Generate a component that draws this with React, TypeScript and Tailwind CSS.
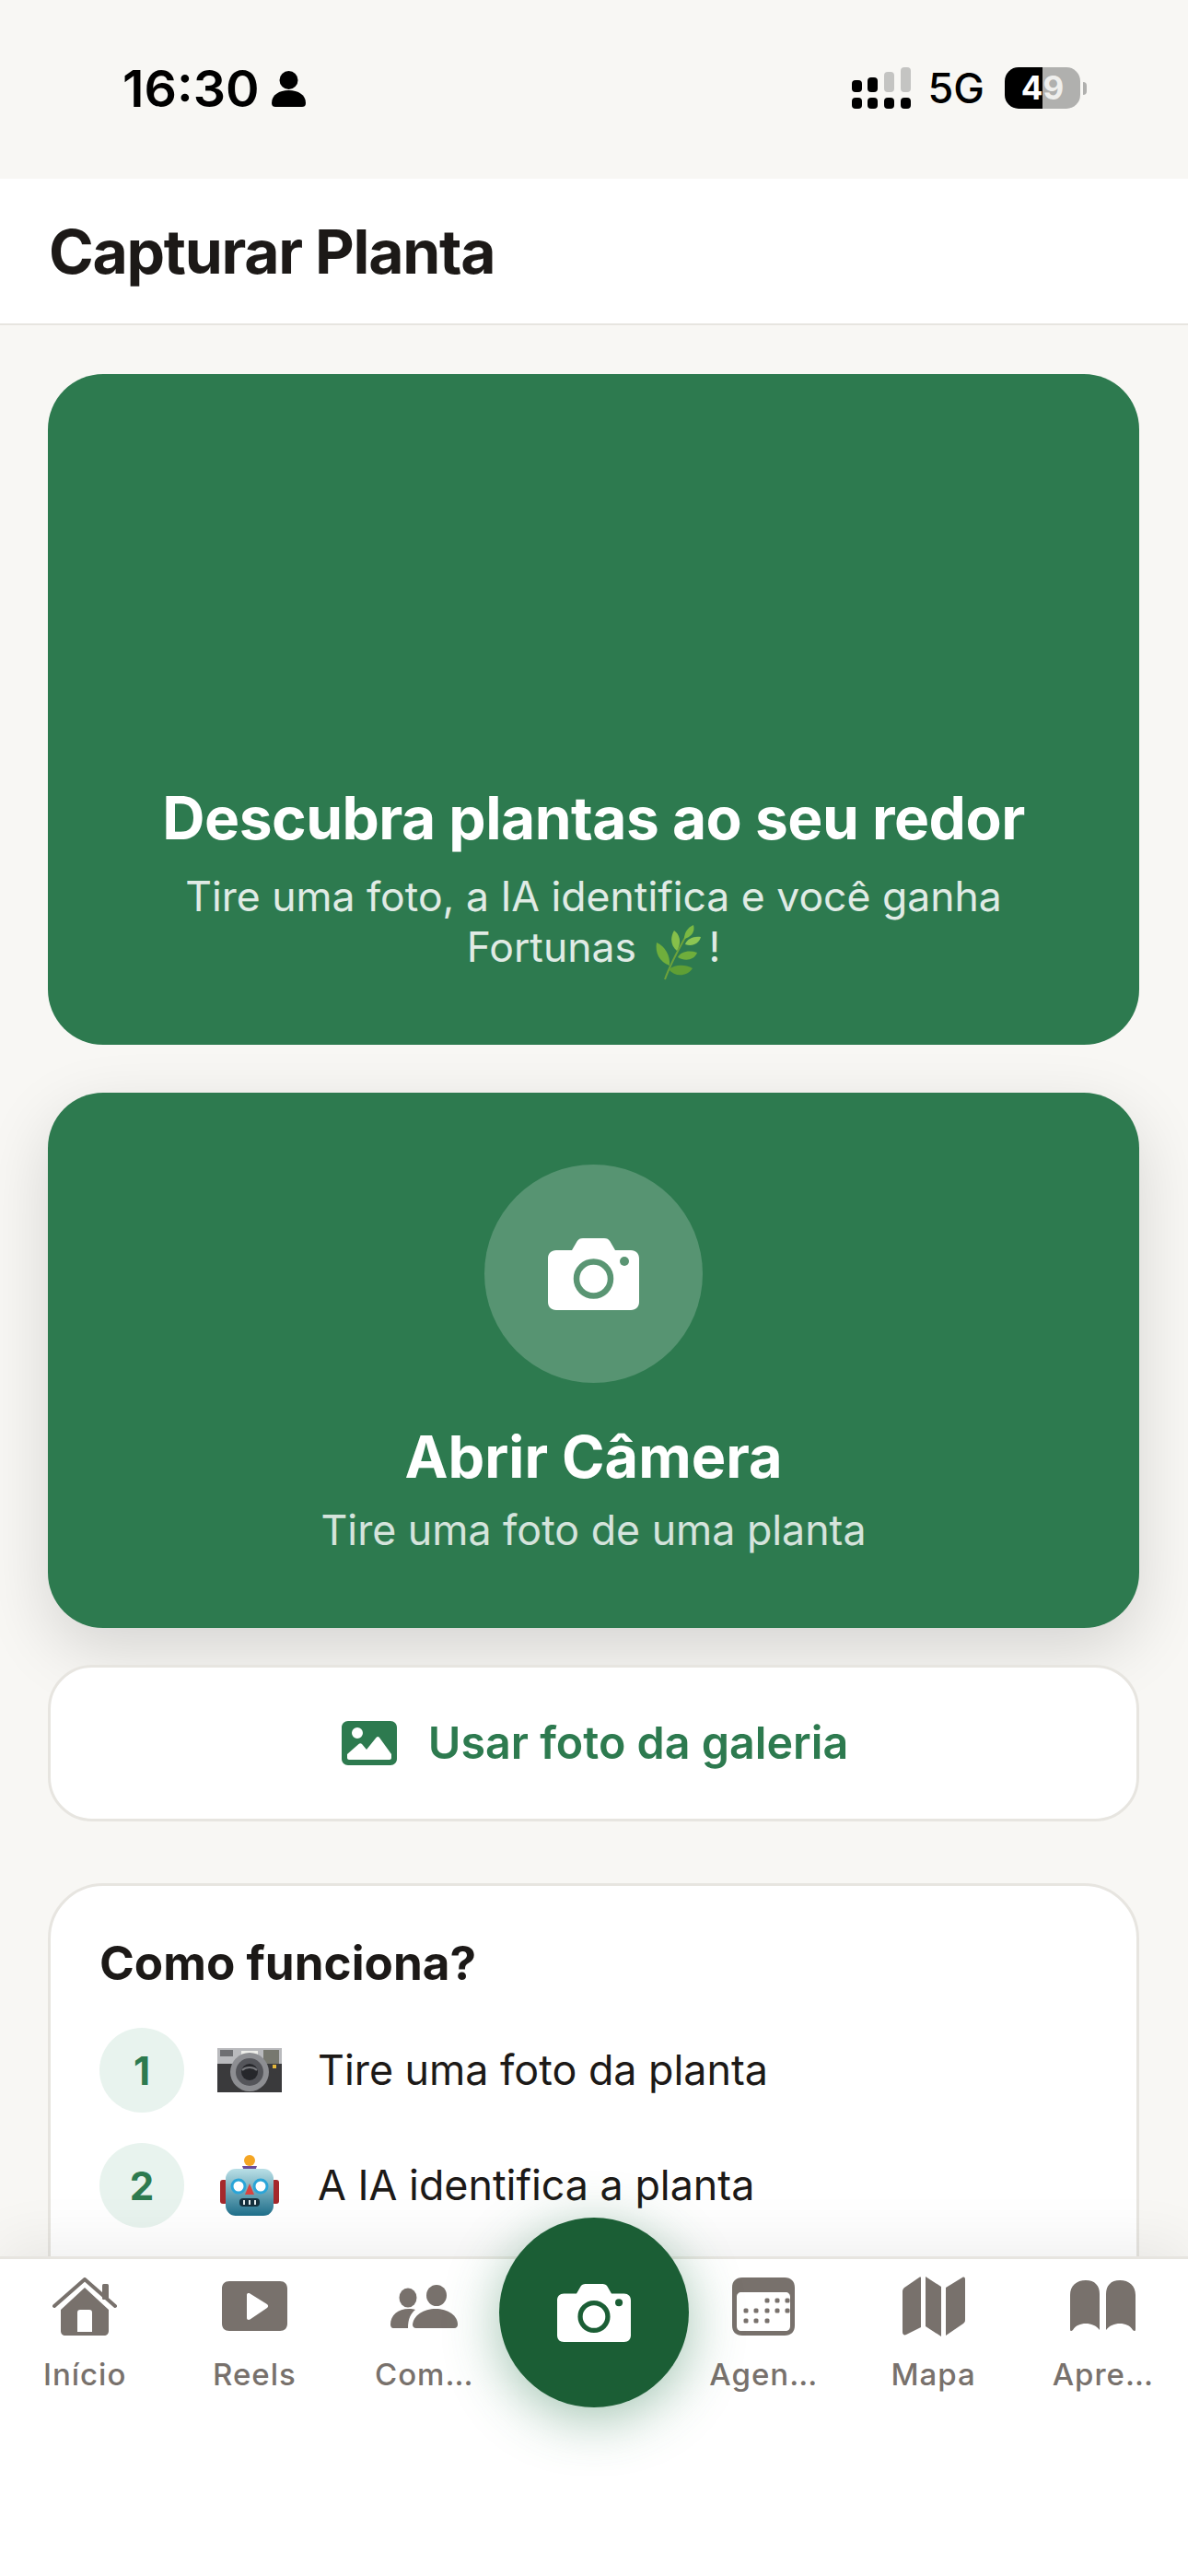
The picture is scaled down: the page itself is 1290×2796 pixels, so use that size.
const green = "#2d7a4f";

function CameraIcon({ className, hole }: { className: string; hole: string }) {
  return (
    <svg viewBox="0 0 99 78" className={className}>
      <path
        fill="#fff"
        d="M9 13h17l5.500-9.500C33 1 35 0 38 0h23c3 0 5 1 6.500 3.500L73 13h17c5.500 0 9 3.500 9 9v47c0 5.500-3.500 9-9 9H9c-5.500 0-9-3.500-9-9V22c0-5.500 3.500-9 9-9z"
      />
      <circle cx="49.500" cy="44" r="18.500" fill="none" stroke={hole} strokeWidth="6.500" />
      <circle cx="83" cy="25" r="5" fill={hole} />
    </svg>
  );
}

function HerbEmoji() {
  return (
    <svg viewBox="0 0 56 60" className="mx-[5px] -my-[10px] inline-block h-[60px] w-[56px] align-[-10px]">
      <path d="M14 59C20 42 31 22 42 3" fill="none" stroke="#6ea23a" strokeWidth="2" />
      <path fill="#6fae3c" d="M19 44C8 40 3 30 5 19c9 4 15 14 14 25z" />
      <path fill="#86c04a" d="M27 28c-6-5-8-13-3-22 7 5 8 14 3 22z" />
      <path fill="#7ab843" d="M35 15c0-6 3-12 10-15 2 7-2 13-10 15z" />
      <path fill="#8cc653" d="M36 21c2-6 9-9 17-8-2 7-9 11-17 8z" />
      <path fill="#6fae3c" d="M28 35c3-6 12-8 21-5-3 8-13 10-21 5z" />
      <path fill="#5f9f35" d="M18 48c7-5 17-6 26-1-6 9-19 10-26 1z" />
    </svg>
  );
}

function CameraEmoji() {
  return (
    <svg viewBox="0 0 70 48" className="h-[48px] w-[70px]">
      <rect x="0" y="0" width="70" height="20" fill="#b9babd" />
      <rect x="3" y="2" width="14" height="7" fill="#6e6f72" />
      <rect x="26" y="3" width="18" height="8" fill="#eeeeea" />
      <rect x="50" y="2" width="17" height="15" fill="#77786f" />
      <rect x="0" y="17" width="70" height="31" fill="#3a3a3c" />
      <circle cx="35" cy="26" r="21" fill="#8d8e92" />
      <circle cx="35" cy="26" r="15" fill="#54555a" />
      <circle cx="35" cy="26" r="9" fill="#26272b" />
      <path d="M27 24c4-4 12-4 16 0" fill="none" stroke="#77787c" strokeWidth="2" />
      <rect x="60" y="18" width="4" height="4" fill="#e5b93c" />
    </svg>
  );
}

function RobotEmoji() {
  return (
    <svg viewBox="0 0 64 66" className="h-[66px] w-[64px]">
      <rect x="0" y="27" width="8" height="26" rx="3" fill="#a5282c" />
      <rect x="56" y="27" width="8" height="26" rx="3" fill="#a5282c" />
      <circle cx="32" cy="6" r="6" fill="#f5a623" />
      <path d="M24 12h16l-3 8H27z" fill="#6b4c9a" />
      <defs>
        <linearGradient id="robot" x1="0" y1="0" x2="0" y2="1">
          <stop offset="0" stopColor="#b9dfe6" />
          <stop offset="1" stopColor="#1f6f8b" />
        </linearGradient>
      </defs>
      <rect x="6" y="15" width="52" height="51" rx="11" fill="url(#robot)" />
      <circle cx="20" cy="34" r="7" fill="#fff" stroke="#2aa5d8" strokeWidth="3" />
      <circle cx="44" cy="34" r="7" fill="#fff" stroke="#2aa5d8" strokeWidth="3" />
      <path d="M32 31l5 12H27z" fill="#d9433f" />
      <rect x="21" y="47" width="22" height="9" rx="4" fill="#15303d" />
      <path d="M26 49v5M32 49v5M38 49v5" stroke="#e6eef0" strokeWidth="2" />
    </svg>
  );
}

function HomeIcon() {
  return (
    <svg viewBox="0 0 70 63" className="h-[63px] w-[70px]" fill="#78716c">
      <path d="M35 11L9 35v23c0 3 2 5 5 5h42c3 0 5-2 5-5V35L35 11zM27 38c0-2 1-3 3-3h10c2 0 3 1 3 3v21H27V38z" fillRule="evenodd" />
      <path d="M2 31L35 2l33 29" fill="none" stroke="#78716c" strokeWidth="4" strokeLinecap="round" strokeLinejoin="round" />
      <rect x="54" y="7" width="7" height="17" rx="1.500" />
    </svg>
  );
}

function ReelsIcon() {
  return (
    <svg viewBox="0 0 71 54" className="h-[54px] w-[71px]" fill="#78716c">
      <path
        fillRule="evenodd"
        d="M8 0h55c5 0 8 3 8 8v38c0 5-3 8-8 8H8c-5 0-8-3-8-8V8c0-5 3-8 8-8zM27 15v25c0 2 2 2.500 3.500 1.500L49 29c1.500-1 1.500-3 0-4L30.500 13.500C29 12.500 27 13 27 15z"
      />
    </svg>
  );
}

function CommunityIcon() {
  return (
    <svg viewBox="0 0 73 47" className="h-[47px] w-[73px]" fill="#78716c">
      <ellipse cx="19" cy="14" rx="9.500" ry="10.500" />
      <ellipse cx="50" cy="11.500" rx="11" ry="11.500" />
      <path d="M0 43c0-10 8-17 20-17 3 0 5 .4 7 1-5 4-8 10-8 20H3c-2 0-3-2-3-4z" />
      <path d="M28 47c-3 0-4-2-4-4 1-10 12-17 25-17s24 7 24 17c0 2-1 4-4 4H28z" />
    </svg>
  );
}

function AgendaIcon() {
  const dots = [
    [38, 25], [49, 25], [60, 25],
    [15, 36], [26, 36], [38, 36], [49, 36], [60, 36],
    [15, 47], [26, 47], [38, 47],
  ];
  return (
    <svg viewBox="0 0 68 63" className="h-[63px] w-[68px]" fill="#78716c">
      <path
        fillRule="evenodd"
        d="M11 0h46c7 0 11 4 11 11v41c0 7-4 11-11 11H11C4 63 0 59 0 52V11C0 4 4 0 11 0zM10 16c-3 0-5 2-5 5v32c0 3 2 5 5 5h48c3 0 5-2 5-5V21c0-3-2-5-5-5H10z"
      />
      {dots.map(([x, y]) => (
        <rect key={`${x}-${y}`} x={x - 2.500} y={y - 2.500} width="5" height="5" rx="1.500" />
      ))}
    </svg>
  );
}

function MapIcon() {
  return (
    <svg viewBox="0 0 68 65" className="h-[65px] w-[68px]" fill="#78716c">
      <path d="M20 1v54L4 63c-2 1-4 0-4-3V16c0-2 1-3 2-4L18 1c1-.6 2-.6 2 0z" />
      <path d="M25 0l17 11v54L25 54V0z" />
      <path d="M47 12L65 1c2-1 3 0 3 2v44c0 2-1 3-2 4L47 64V12z" />
    </svg>
  );
}

function BookIcon() {
  return (
    <svg viewBox="0 0 71 56" className="h-[56px] w-[71px]" fill="#78716c">
      <path d="M0 16C0 6 7 0 17 0s15 6 15 15v39c-4-5-9-7-15-7-6 0-11 2-14 7-2 2-3 1-3-1V16z" />
      <path d="M71 16C71 6 64 0 54 0S39 6 39 15v39c4-5 9-7 15-7 6 0 11 2 14 7 2 2 3 1 3-1V16z" />
    </svg>
  );
}

const tabsLeft = [
  { label: "Início", icon: <HomeIcon /> },
  { label: "Reels", icon: <ReelsIcon /> },
  { label: "Com…", icon: <CommunityIcon /> },
];

const tabsRight = [
  { label: "Agen…", icon: <AgendaIcon /> },
  { label: "Mapa", icon: <MapIcon /> },
  { label: "Apre…", icon: <BookIcon /> },
];

function TabItem({ label, icon }: { label: string; icon: React.ReactNode }) {
  return (
    <div className="flex flex-col items-center">
      <div className="flex h-[70px] items-center">{icon}</div>
      <span className="mt-[19px] text-[33px] leading-[40px] font-medium tracking-[1px] text-[#78716c]">
        {label}
      </span>
    </div>
  );
}

function Step({ n, icon, text }: { n: number; icon: React.ReactNode; text: string }) {
  return (
    <div className="flex items-center">
      <div className="flex h-[92px] w-[92px] items-center justify-center rounded-full bg-[#e8f3ee] text-[42px] font-bold text-[#2d7a4f]">
        {n}
      </div>
      <div className="ml-[36px] flex w-[70px] justify-center">{icon}</div>
      <span className="ml-[39px] text-[44.8px] leading-[54px] text-[#1c1917]">{text}</span>
    </div>
  );
}

export default function App() {
  return (
    <div className="flex h-[2796px] w-[1290px] flex-col overflow-hidden bg-[#f8f7f4] font-['Inter',sans-serif]">
      <div className="flex h-[194px] shrink-0 items-start justify-between pt-[66px] pr-[110px] pl-[133px]">
        <div className="flex items-center gap-[13px]">
          <span className="text-[55.5px] leading-[60px] font-semibold text-black">16:30</span>
          <svg viewBox="0 0 37 39" className="h-[39px] w-[37px]">
            <circle cx="18.500" cy="10" r="10" fill="#000" />
            <path d="M0 35c0-9 8-14 18.500-14S37 26 37 35c0 3-2 4-4 4H4c-2 0-4-1-4-4z" fill="#000" />
          </svg>
        </div>
        <div className="flex items-center pt-[7px]">
          <svg viewBox="0 0 64 45" className="h-[45px] w-[64px]">
            <rect x="0" y="14" width="11" height="13" rx="4" fill="#000" />
            <rect x="17" y="11" width="11" height="16" rx="4" fill="#000" />
            <rect x="35" y="5" width="11" height="22" rx="4" fill="#c4c4c2" />
            <rect x="53" y="0" width="11" height="27" rx="4" fill="#c4c4c2" />
            <rect x="0" y="33" width="11" height="12" rx="4" fill="#000" />
            <rect x="17" y="33" width="11" height="12" rx="4" fill="#000" />
            <rect x="35" y="33" width="11" height="12" rx="4" fill="#000" />
            <rect x="53" y="33" width="11" height="12" rx="4" fill="#000" />
          </svg>
          <span className="ml-[19px] text-[45px] leading-[45px] font-medium text-black">5G</span>
          <div className="ml-[22px] flex h-[45px] w-[82px] items-center justify-center rounded-[15px] bg-[linear-gradient(90deg,#000_50%,#b0b0ae_50%)] text-[35px] font-bold text-white">
            4<span className="text-[#efefed]">9</span>
          </div>
          <div className="ml-[3px] h-[14px] w-[4px] rounded-r-full bg-[#b0b0ae]" />
        </div>
      </div>

      <header className="flex h-[159px] shrink-0 items-center border-b-[2px] border-[#e7e5e0] bg-white pl-[53px]">
        <h1 className="text-[66px] leading-[80px] font-bold tracking-[-1.3px] text-[#1c1917]">Capturar Planta</h1>
      </header>

      <main className="flex min-h-0 flex-1 flex-col overflow-hidden pt-[53px] pr-[53px] pl-[52px]">
        <section className="flex h-[728px] shrink-0 flex-col items-center justify-end rounded-[60px] bg-[#2d7a4f] pb-[78px] text-center">
          <h2 className="text-[64px] leading-[76px] font-bold tracking-[-0.5px] text-white">Descubra plantas ao seu redor</h2>
          <p className="mt-[20px] w-[1000px] text-[44.5px] leading-[55px] text-white/85">
            Tire uma foto, a IA identifica e você ganha Fortunas <HerbEmoji />!
          </p>
        </section>

        <button className="mt-[52px] flex h-[581px] shrink-0 flex-col items-center rounded-[60px] bg-[#2d7a4f] pt-[78px] shadow-[0_24px_72px_rgba(0,0,0,0.14)]">
          <div className="flex h-[237px] w-[237px] items-center justify-center rounded-full bg-white/20">
            <CameraIcon className="h-[78px] w-[99px]" hole="#5a9573" />
          </div>
          <span className="mt-[40px] text-[63px] leading-[80px] font-bold text-white">Abrir Câmera</span>
          <span className="mt-[13px] text-[44.7px] leading-[54px] text-white/80">Tire uma foto de uma planta</span>
        </button>

        <button className="mt-[40px] flex h-[170px] shrink-0 items-center justify-center gap-[34px] rounded-[48px] border-[3px] border-[#e7e5e0] bg-white pl-[3px]">
          <svg viewBox="0 0 60 48" className="h-[48px] w-[60px]">
            <path
              fill={green}
              fillRule="evenodd"
              d="M7 0h46c4 0 7 3 7 7v34c0 4-3 7-7 7H7c-4 0-7-3-7-7V7c0-4 3-7 7-7zM6 36v4c0 1 1 2 2 2h44c1 0 2-1 2-2v-4L41 18c-1-1.500-2.500-1.500-3.500 0L27 31l-5-6c-1-1-2.500-1-3.500 0L6 36zM17 7a6 6 0 1 0 0 12 6 6 0 0 0 0-12z"
            />
          </svg>
          <span className="text-[48.4px] leading-[58px] font-semibold text-[#2d7a4f]">Usar foto da galeria</span>
        </button>

        <section className="mt-[67px] shrink-0 rounded-[60px] border-[3px] border-[#e7e5e0] bg-white pt-[52px] pr-[54px] pl-[53px]">
          <h3 className="text-[51.2px] leading-[62px] font-bold text-[#1c1917]">Como funciona?</h3>
          <div className="mt-[40px] flex flex-col gap-[33px]">
            <Step n={1} icon={<CameraEmoji />} text="Tire uma foto da planta" />
            <Step n={2} icon={<RobotEmoji />} text="A IA identifica a planta" />
          </div>
          <div className="h-[200px]" />
        </section>
      </main>

      <nav className="relative grid h-[347px] shrink-0 grid-cols-7 border-t-[3px] border-[#e7e5e0] bg-white pt-[16px] shadow-[0_-12px_60px_rgba(0,0,0,0.07)]">
        {tabsLeft.map((t) => (
          <TabItem key={t.label} label={t.label} icon={t.icon} />
        ))}
        <div />
        {tabsRight.map((t) => (
          <TabItem key={t.label} label={t.label} icon={t.icon} />
        ))}
        <div className="absolute top-[-45px] left-[542px] flex h-[206px] w-[206px] items-center justify-center rounded-full bg-[#1b5e35] shadow-[0_12px_60px_rgba(45,122,79,0.45)]">
          <CameraIcon className="h-[63px] w-[80px]" hole="#1b5e35" />
        </div>
      </nav>
    </div>
  );
}
